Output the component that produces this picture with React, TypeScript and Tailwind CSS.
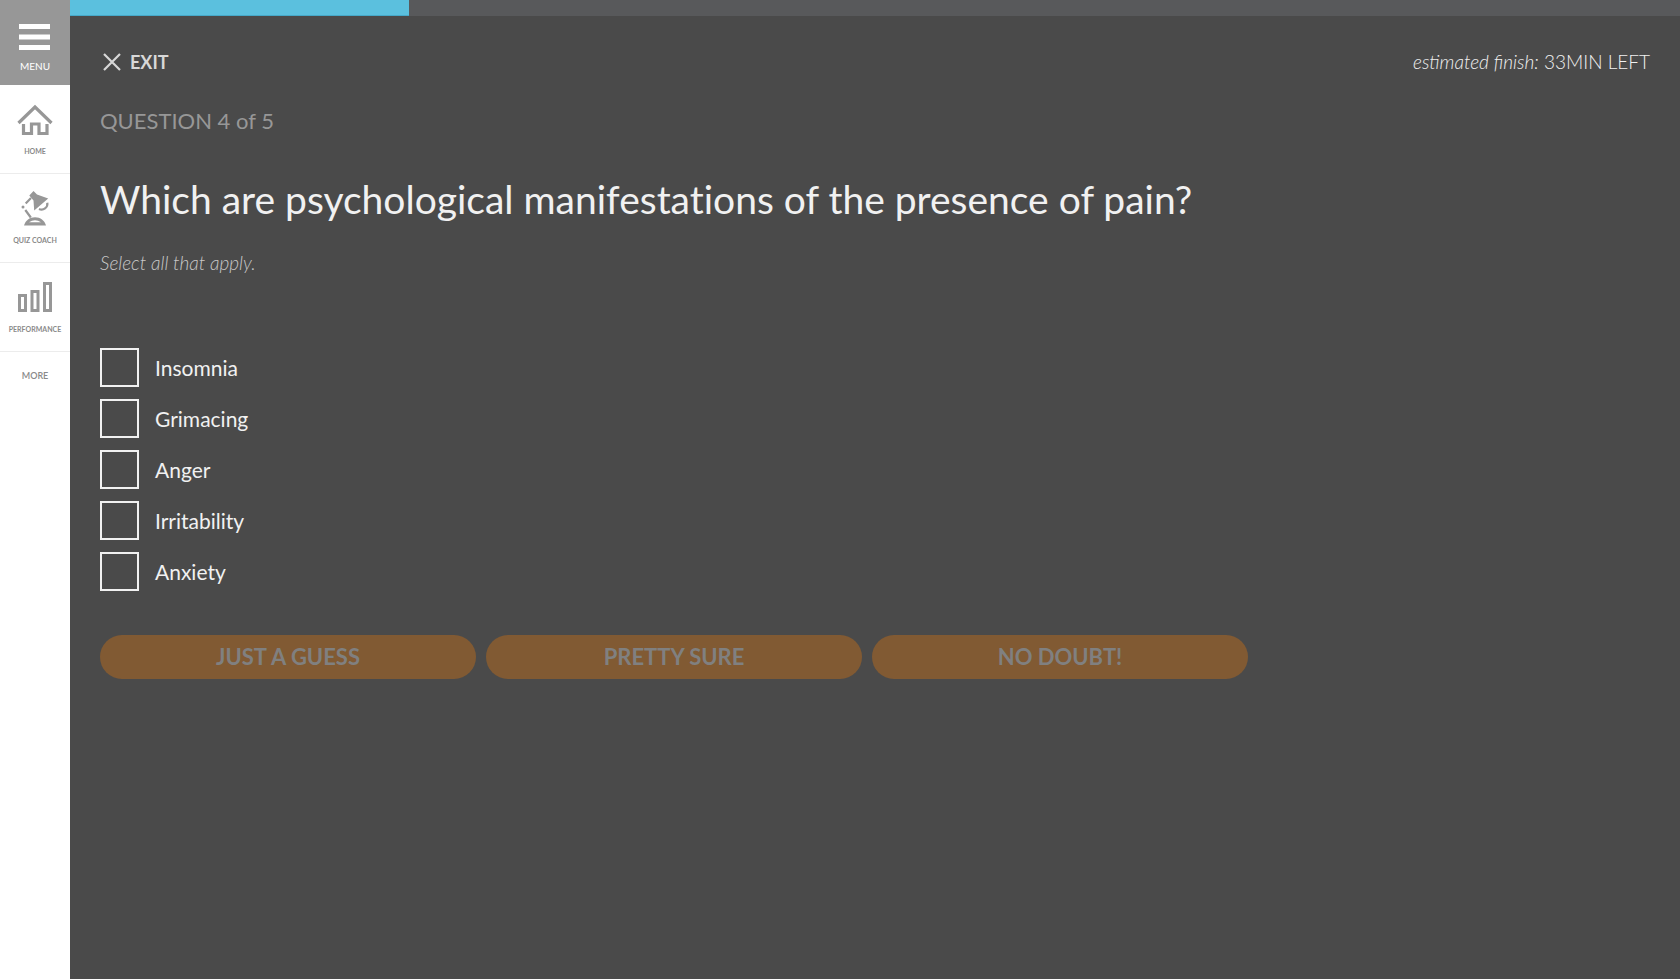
import type { ReactNode } from "react";

const answers = ["Insomnia", "Grimacing", "Anger", "Irritability", "Anxiety"];
const confidence = ["JUST A GUESS", "PRETTY SURE", "NO DOUBT!"];

function HomeIcon() {
  return (
    <svg width="36" height="32" viewBox="0 0 36 32" fill="none" stroke="#979797" aria-hidden="true">
      <path d="M1.5 19 L18 3 L34.500 19" strokeWidth="3.200" />
      <path d="M6.500 20 V29.500 H14.500 V20 H22 V29.500 H30 V20" strokeWidth="3.200" />
    </svg>
  );
}

function LampIcon() {
  return (
    <svg width="36" height="36" viewBox="0 0 36 36" fill="#979797" aria-hidden="true">
      <path d="M16.500 0 L20 3.500 L31.200 7.500 L17.200 19.500 L16.500 9.500 L12.300 4.500 Z" />
      <path d="M30.300 11.800 A5.800 5.800 0 0 1 22 18" fill="none" stroke="#979797" strokeWidth="2.200" />
      <path d="M14 7 L8.700 12.500 M8.300 19 L13.800 26.500" fill="none" stroke="#979797" strokeWidth="2.200" />
      <circle cx="6" cy="16" r="1.500" />
      <path d="M7 34.500 C8.500 29.500 12.500 26.300 18 26.300 C23.500 26.300 27.500 29.500 29 34.500 Z" />
      <path d="M12 31.300 Q18 27.300 24 31.300 Z" fill="#ffffff" />
    </svg>
  );
}

function BarsIcon() {
  return (
    <svg width="36" height="32" viewBox="0 0 36 32" fill="none" stroke="#979797" strokeWidth="3" aria-hidden="true">
      <path d="M2.500 13.500 H8.500 V28.500 H2.500 Z M15 9.500 H21 V28.500 H15 Z M27.500 1.500 H33.500 V28.500 H27.500 Z" />
    </svg>
  );
}

function NavItem({ label, children }: { label: string; children: ReactNode }) {
  return (
    <a
      href="#"
      className="flex h-[89px] flex-col items-center justify-between border-b border-[#ececec] pt-[17px] pb-4 text-[7px] leading-3 font-bold whitespace-nowrap text-[#8a8a8a]"
    >
      <span className="flex h-9 items-center">{children}</span>
      {label}
    </a>
  );
}

export default function App() {
  return (
    <div className="flex min-h-screen bg-[#4a4a4a] font-[Lato,sans-serif]">
      <nav className="flex w-[70px] shrink-0 flex-col bg-white">
        <button type="button" className="flex h-[85px] flex-col items-center bg-[#979797] pt-6 text-[10px] leading-4 text-white">
          <svg width="32" height="26" viewBox="0 0 32 26" fill="#ffffff" className="mb-2 shrink-0" aria-hidden="true">
            <path d="M0 0H31V5H0Z M0 10.500H31V15.500H0Z M0 21H31V26H0Z" />
          </svg>
          MENU
        </button>
        <NavItem label="HOME"><HomeIcon /></NavItem>
        <NavItem label="QUIZ COACH"><LampIcon /></NavItem>
        <NavItem label="PERFORMANCE"><BarsIcon /></NavItem>
        <button type="button" className="py-4 text-[9px] leading-4 font-semibold text-[#8a8a8a]">MORE</button>
      </nav>

      <main className="min-w-0 flex-1">
        <div className="h-4 bg-[#58595b]">
          <div className="h-full w-[21.05%] border-b border-[#46a9c9] bg-[#5bc0de]" />
        </div>

        <div className="px-[30px]">
          <header className="flex items-center justify-between pt-8 text-[#d8d8d8]">
            <button type="button" className="flex items-center gap-2 pl-[3px] text-lg leading-7 font-bold">
              <svg width="19" height="18" viewBox="0 0 19 18" stroke="#d8d8d8" strokeWidth="2.200" aria-hidden="true">
                <path d="M1 1 L17 17 M17 1 L1 17" />
              </svg>
              EXIT
            </button>
            <p className="text-[19px] leading-7 font-light text-[#f1f1f1]">
              <i>estimated finish:</i> 33MIN LEFT
            </p>
          </header>

          <p className="mt-[29px] text-[22px] leading-8 text-[#979797]">QUESTION 4 of 5</p>
          <h1 className="mt-8 text-[39px] leading-[60px] text-[#f1f1f1] [font-variant-ligatures:none]">
            Which are psychological manifestations of the presence of pain?
          </h1>
          <p className="mt-[18px] text-[19px] leading-8 font-light text-[#c8c8c8] italic">Select all that apply.</p>

          <ul className="mt-[69px] flex flex-col gap-3">
            {answers.map((answer) => (
              <li key={answer}>
                <label className="flex items-center gap-4 text-[21px] leading-7 text-[#f1f1f1]">
                  <input type="checkbox" className="size-[39px] shrink-0 appearance-none border-2 border-[#f1f1f1] checked:bg-[#5bc0de]" />
                  {answer}
                </label>
              </li>
            ))}
          </ul>

          <div className="mt-11 grid max-w-[1148px] grid-cols-3 gap-[10px]">
            {confidence.map((label) => (
              <button key={label} type="button" disabled className="h-11 rounded-full bg-[#815a33] text-[22px] leading-8 font-bold text-[#808080]">
                {label}
              </button>
            ))}
          </div>
        </div>
      </main>
    </div>
  );
}
